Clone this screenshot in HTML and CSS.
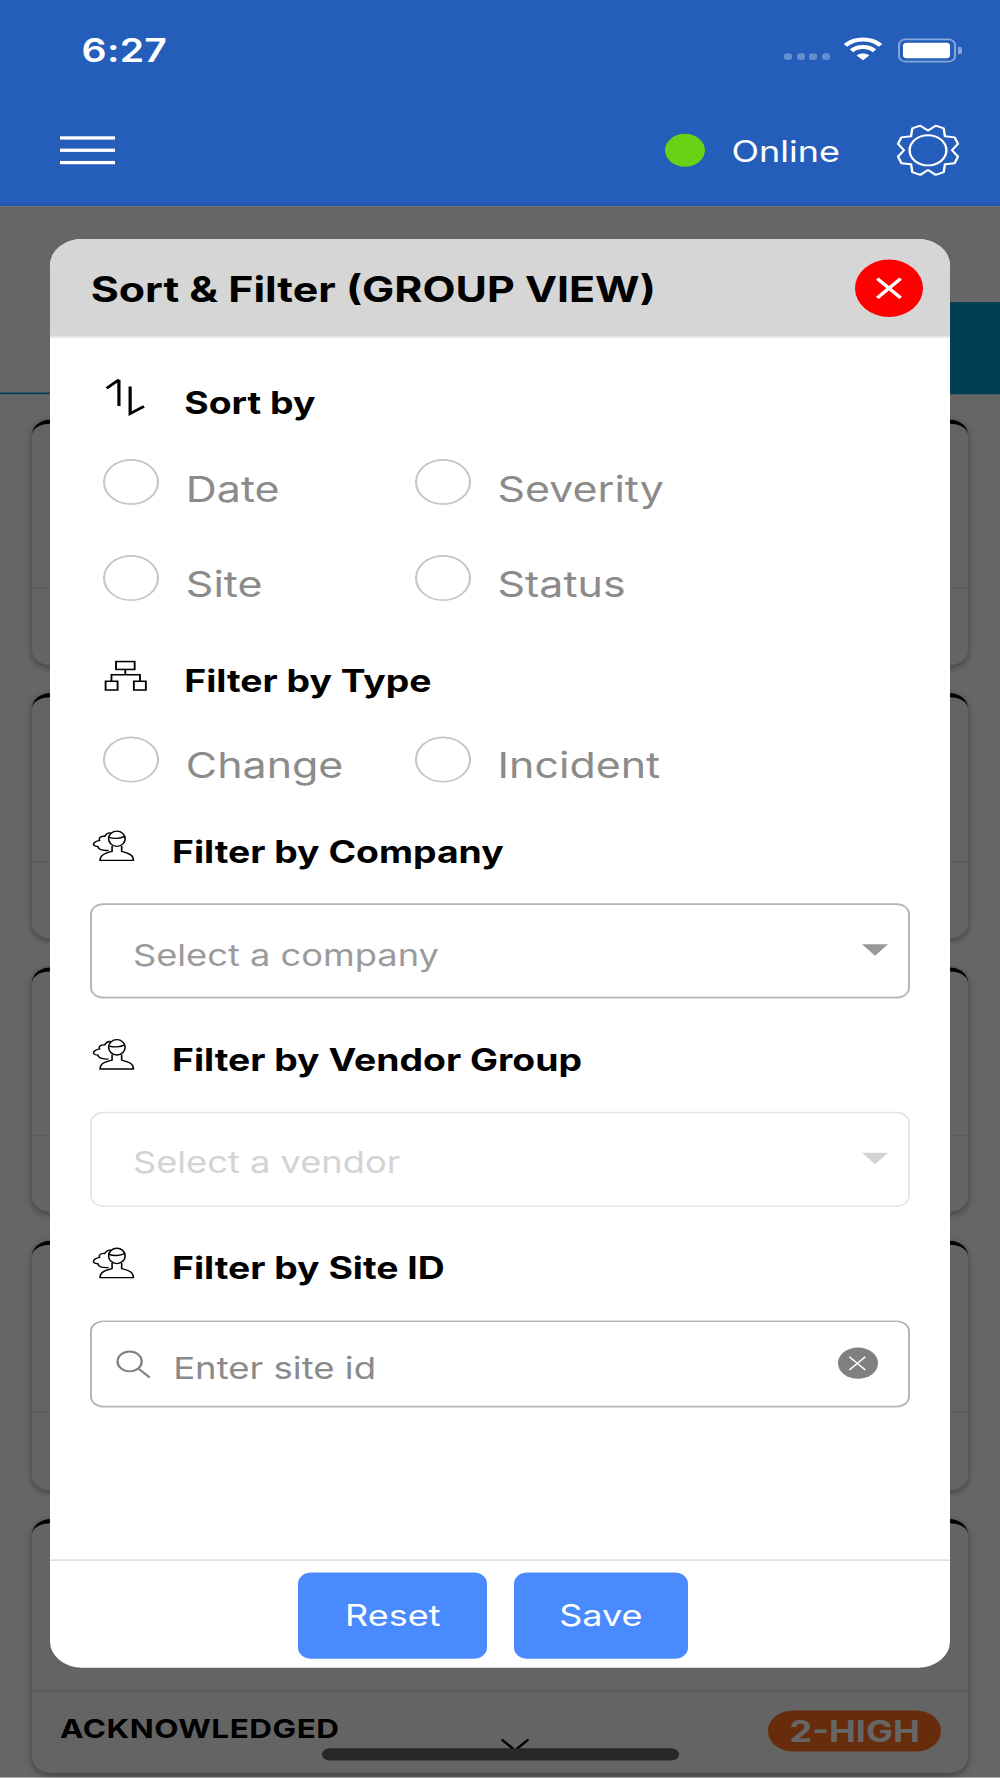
FILE: index.html
```html
<!DOCTYPE html>
<html lang="en">
<head>
<meta charset="utf-8">
<title>Sort &amp; Filter</title>
<link rel="stylesheet" href="styles.css">
</head>
<body>
<div class="screen">
  <header class="app-header">
    <div class="status-bar">
      <span class="time">6:27</span>
      <div class="status-icons">
        <div class="signal"><i></i><i></i><i></i><i></i></div>
        <svg class="wifi" viewBox="0 0 16 12"><path d="M.8 4.2C4.8.3 11.2.3 15.2 4.2" class="wifi-arc"/><path d="M3.3 6.9C5.9 4.4 10.1 4.4 12.7 6.9" class="wifi-arc"/><path d="M8 11.6 5.4 9.2C6.9 7.9 9.1 7.9 10.6 9.2Z" class="wifi-dot"/></svg>
        <div class="battery"><div class="battery-fill"></div></div>
        <div class="battery-nub"></div>
      </div>
    </div>
    <div class="nav-bar">
      <div class="hamburger"><i></i><i></i><i></i></div>
      <div class="nav-right">
        <span class="dot"></span>
        <span class="online">Online</span>
        <svg class="gear" viewBox="0 0 24 24"><polygon points="23.23,14.9 22,17.89 18.36,18.36 17.89,22 14.9,23.23 12,21 9.1,23.23 6.11,22 5.64,18.36 2,17.89 .77,14.9 3,12 .77,9.1 2,6.11 5.64,5.64 6.11,2 9.1,.77 12,3 14.9,.77 17.89,2 18.36,5.64 22,6.11 23.23,9.1 21,12"/><circle cx="12" cy="12" r="6.9"/></svg>
      </div>
    </div>
  </header>

  <main class="content">
    <div class="tabs"><div class="tab"></div><div class="tab tab-active"></div></div>
    <div class="card-list">
      <article class="card"><div class="card-main"></div><div class="card-foot"></div></article>
      <article class="card"><div class="card-main"></div><div class="card-foot"></div></article>
      <article class="card"><div class="card-main"></div><div class="card-foot"></div></article>
      <article class="card card-tall"><div class="card-main"></div><div class="card-foot"></div></article>
      <article class="card card-last">
        <div class="card-main"></div>
        <div class="card-foot">
          <span class="card-status">ACKNOWLEDGED</span>
          <svg class="chevron" viewBox="0 0 12 6"><path d="M1 .5 6 5.5 11 .5"/></svg>
          <span class="badge">2-HIGH</span>
        </div>
      </article>
    </div>
    <div class="backdrop"></div>
  </main>

  <section class="modal">
    <div class="modal-head">
      <h1 class="modal-title">Sort &amp; Filter (GROUP VIEW)</h1>
      <div class="close"><svg viewBox="0 0 12 12"><path d="M1 1 11 11M11 1 1 11"/></svg></div>
    </div>
    <div class="modal-body">
      <div class="section-title title-sort">
        <svg class="ico-sort" viewBox="0 0 16 18"><path d="M5.6.6V12.5M5.6.6 1 4.4M9.8 3.6V16L15 12.7"/></svg>
        <span>Sort by</span>
      </div>
      <div class="radio-grid">
        <label class="radio"><span class="radio-mark"></span><span class="radio-text">Date</span></label>
        <label class="radio"><span class="radio-mark"></span><span class="radio-text">Severity</span></label>
        <label class="radio"><span class="radio-mark"></span><span class="radio-text">Site</span></label>
        <label class="radio"><span class="radio-mark"></span><span class="radio-text">Status</span></label>
      </div>
      <div class="section-title title-type">
        <svg class="ico-tree" viewBox="0 0 16 15"><path d="M8 4.6V7H2.8V10M8 7H13.5V10"/><rect x="4.5" y="1" width="7" height="3.6"/><rect x=".6" y="10" width="4.5" height="4"/><rect x="11.2" y="10" width="4.5" height="4"/></svg>
        <span>Filter by Type</span>
      </div>
      <div class="radio-grid radio-grid-single">
        <label class="radio"><span class="radio-mark"></span><span class="radio-text">Change</span></label>
        <label class="radio"><span class="radio-mark"></span><span class="radio-text">Incident</span></label>
      </div>
      <div class="section-title title-company">
        <svg class="ico-user" viewBox="0 0 16.5 15"><use href="#user"/></svg>
        <span>Filter by Company</span>
      </div>
      <div class="select">
        <span class="select-text">Select a company</span>
        <span class="caret"></span>
      </div>
      <div class="section-title title-vendor">
        <svg class="ico-user" viewBox="0 0 16.5 15"><use href="#user"/></svg>
        <span>Filter by Vendor Group</span>
      </div>
      <div class="select select-disabled">
        <span class="select-text">Select a vendor</span>
        <span class="caret"></span>
      </div>
      <div class="section-title title-site">
        <svg class="ico-user" viewBox="0 0 16.5 15"><use href="#user"/></svg>
        <span>Filter by Site ID</span>
      </div>
      <div class="search">
        <svg class="ico-search" viewBox="0 0 14 14"><circle cx="5.7" cy="5.7" r="4.7"/><path d="M9 9 13.5 13.3"/></svg>
        <span class="search-text">Enter site id</span>
        <span class="clear"><svg viewBox="0 0 10 10"><path d="M2 2 8 8M8 2 2 8"/></svg></span>
      </div>
    </div>
    <div class="modal-foot">
      <button class="btn btn-reset">Reset</button>
      <button class="btn btn-save">Save</button>
    </div>
  </section>

  <div class="home-indicator"></div>
</div>

<svg class="defs" width="0" height="0">
  <symbol id="user" viewBox="0 0 16.5 15" overflow="visible">
    <ellipse cx="9.7" cy="4.3" rx="3.1" ry="3.5"/>
    <path d="M6.7 3.6C8.4 4.4 11 4.3 12.6 3.2"/>
    <path d="M7.9 7.6V10.1C5.4 10.9 3.4 11.6 3.4 14.2H15.9C15.9 11.6 13.9 10.8 11.5 10.1V7.6"/>
    <path d="M7.6 1.7C6.4 1.4 5.6 2.2 5.1 3.2 3.8 3 2.7 3.9 3.2 5 .9 5.6-.2 7.6 2.6 7.9 2.9 9.3 4.6 9.8 6.6 9.6"/>
  </symbol>
</svg>
</body>
</html>
```
FILE: styles.css
```css
html, body {
  margin: 0;
  padding: 0;
  width: 1000px;
  height: 1778px;
  overflow: hidden;
  background: #fff;
}

* { box-sizing: border-box; }

/* The capture is a 375x812 phone layout stretched to 1000x1778 */
.screen {
  position: relative;
  width: 375px;
  height: 811.9px;
  margin-bottom: -147px;
  overflow: hidden;
  font-family: Inter, "Liberation Sans", sans-serif;
  zoom: 2.6667;
  transform: scaleY(.82113);
  transform-origin: 0 0;
}

.defs { position: absolute; }

/* Header */
.app-header {
  height: 94px;
  background: #245eba;
  color: #fff;
  border-bottom: 1px solid #1f56ac;
}

.status-bar {
  height: 44px;
  display: flex;
  align-items: center;
  justify-content: space-between;
  padding: 1px 14.4px 0 30.6px;
}

.time {
  font-size: 14.7px;
  font-weight: 600;
  letter-spacing: .1px;
  margin-top: 1px;
}

.status-icons {
  display: flex;
  align-items: center;
  margin-top: 1px;
}

.signal {
  display: flex;
  gap: 1.7px;
  margin: 6px 5px 0 0;
}

.signal i {
  width: 3px;
  height: 3px;
  border-radius: 1.2px;
  background: rgba(255, 255, 255, .3);
}

.wifi {
  width: 15px;
  height: 11px;
  margin: -1px 5.4px 0 0;
}

.wifi-arc {
  fill: none;
  stroke: #fff;
  stroke-width: 2;
}

.wifi-dot { fill: #fff; }

.battery {
  width: 21.7px;
  height: 11px;
  padding: 1.3px;
  border: 1px solid rgba(255, 255, 255, .45);
  border-radius: 2.8px;
}

.battery-fill {
  height: 100%;
  background: #fff;
  border-radius: 1.4px;
}

.battery-nub {
  width: 1.4px;
  height: 3.6px;
  margin-left: .9px;
  background: rgba(255, 255, 255, .45);
  border-radius: 0 1px 1px 0;
}

.nav-bar {
  height: 49px;
  display: flex;
  align-items: center;
  justify-content: space-between;
  padding: 0 15px 0 22.5px;
}

.hamburger {
  width: 20.8px;
  display: flex;
  flex-direction: column;
  gap: 4.1px;
}

.hamburger i {
  height: 1.5px;
  background: #fff;
}

.nav-right {
  display: flex;
  align-items: center;
}

.dot {
  width: 15px;
  height: 15px;
  border-radius: 50%;
  background: #6ad014;
  margin-right: 10px;
}

.online {
  font-size: 13.5px;
  width: 61.7px;
  margin-top: 1px;
}

.gear {
  width: 24px;
  height: 24px;
  fill: none;
  stroke: #fff;
  stroke-width: .9;
  stroke-linejoin: round;
}

/* Content behind the dialog */
.content {
  position: relative;
  height: 717.9px;
  background: #fff;
}

.tabs {
  display: flex;
  height: 42px;
  position: absolute;
  top: 44px;
  left: 0;
  right: 0;
}

.tab {
  flex: 1;
  border-bottom: 1px solid #009ecd;
}

.tab-active { background: #009ecd; }

.card-list {
  padding: 97.6px 12px 0;
  display: flex;
  flex-direction: column;
  gap: 13px;
}

.card {
  height: 112px;
  display: flex;
  flex-direction: column;
  background: #fafafa;
  border-top: 2px solid #000;
  border-radius: 7px;
  box-shadow: 0 1px 3px rgba(0, 0, 0, .35);
}

.card-tall { height: 114px; }
.card-last { height: 116px; }

.card-main {
  height: 75.5px;
  border-bottom: 1px solid #e2e2e2;
  flex: none;
}

.card-tall .card-main { height: 77px; }
.card-last .card-main { height: 77px; }

.card-foot {
  position: relative;
  flex: 1;
  display: flex;
  align-items: center;
  justify-content: space-between;
  padding: 0 10px 3px 10.5px;
}

.card-status {
  font-size: 11.8px;
  font-weight: 700;
  color: #000;
  letter-spacing: .2px;
}

.badge {
  width: 65px;
  height: 18.6px;
  display: flex;
  align-items: center;
  justify-content: center;
  border-radius: 9.3px;
  background: #ff6e20;
  color: #fff;
  font-size: 13.5px;
  font-weight: 700;
  margin-top: 2px;
}

.chevron {
  position: absolute;
  left: 175px;
  top: 21.5px;
  width: 12px;
  height: 6px;
  fill: none;
  stroke: #000;
  stroke-width: 1;
}

.backdrop {
  position: absolute;
  inset: 0;
  background: rgba(0, 0, 0, .6);
}

/* Dialog */
.modal {
  position: absolute;
  left: 18.7px;
  top: 109px;
  width: 337.6px;
  height: 652.5px;
  display: flex;
  flex-direction: column;
  background: #fff;
  border-radius: 12px;
  overflow: hidden;
}

.modal-head {
  flex: none;
  height: 45px;
  display: flex;
  align-items: center;
  justify-content: space-between;
  padding: 0 10.2px 0 15.3px;
  background: #d6d6d6;
  border-bottom: 1px solid #e4e4e4;
}

.modal-title {
  margin: 2px 0 0;
  font-size: 16.1px;
  font-weight: 700;
  color: #000;
}

.close {
  width: 25.6px;
  height: 26.4px;
  display: flex;
  align-items: center;
  justify-content: center;
  border-radius: 50%;
  background: #ff0000;
  margin-top: 1px;
}

.close svg {
  width: 10.5px;
  height: 12px;
  fill: none;
  stroke: #fff;
  stroke-width: 1.6;
}

.modal-body {
  flex: 1;
  display: flex;
  flex-direction: column;
  padding: 20px 14.9px 0 15px;
}

.section-title {
  flex: none;
  position: relative;
  height: 20px;
  display: flex;
  align-items: center;
  font-size: 14px;
  font-weight: 700;
  color: #000;
}

.title-sort, .title-type { padding-left: 35.4px; }

.title-company, .title-vendor, .title-site { padding-left: 30.8px; }

.title-type { margin-top: 26.7px; }
.title-company { margin-top: 21.5px; }
.title-vendor { margin-top: 18px; }
.title-site { margin-top: 18px; }

.ico-sort, .ico-tree, .ico-user {
  position: absolute;
  fill: none;
  stroke: #000;
}

.ico-sort {
  left: 5.3px;
  top: -1px;
  width: 16px;
  height: 18px;
  stroke-width: 1.2;
}

.ico-tree {
  left: 5.3px;
  top: 0;
  width: 16px;
  height: 15px;
  stroke-width: .7;
}

.ico-user {
  left: .6px;
  top: 0;
  width: 16.5px;
  height: 15px;
  stroke-width: .6;
  overflow: visible;
}

.radio-grid {
  display: grid;
  grid-template-columns: 116.9px 1fr;
  row-gap: 22.8px;
  margin-top: 15.7px;
  padding-left: 5px;
}

.radio-grid-single { margin-top: 15.2px; }

.radio {
  display: flex;
  height: 21px;
  align-items: center;
}

.radio-mark {
  flex: none;
  width: 21px;
  height: 21px;
  border: 1px solid #c5c5c8;
  border-radius: 50%;
  margin-right: 10px;
}

.radio-text {
  font-size: 16.1px;
  color: #8d8a8a;
  margin-top: 5.5px;
}

.select {
  flex: none;
  position: relative;
  height: 43.3px;
  margin-top: 13.7px;
  display: flex;
  align-items: center;
  padding: 4px 15.4px 0;
  border: 1px solid #b5b5b5;
  border-radius: 5px;
}

.select-text {
  font-size: 13.6px;
  color: #9b9b9b;
}

.caret {
  position: absolute;
  right: 7.5px;
  top: 18px;
  width: 0;
  height: 0;
  border-left: 5px solid transparent;
  border-right: 5px solid transparent;
  border-top: 5.5px solid #999;
}

.select-disabled {
  margin-top: 14px;
  padding-top: 3px;
  border-color: #e5e5e5;
}

.select-disabled .select-text { color: #d3d3d3; }
.select-disabled .caret { border-top-color: #d3d3d3; }

.search {
  flex: none;
  height: 39.6px;
  margin-top: 14px;
  display: flex;
  align-items: center;
  padding: 0 11.5px 0 8.7px;
  border: 1px solid #b5b5b5;
  border-radius: 5px;
}

.ico-search {
  width: 13.5px;
  height: 14.5px;
  fill: none;
  stroke: #808080;
  stroke-width: .9;
  margin: 0 8.3px 0 0;
}

.search-text {
  flex: 1;
  font-size: 13.7px;
  color: #8a8a8a;
  margin-top: 3.5px;
}

.clear {
  width: 15px;
  height: 14px;
  display: flex;
  align-items: center;
  justify-content: center;
  border-radius: 50%;
  background: #808080;
  margin-top: -1px;
}

.clear svg {
  width: 10px;
  height: 10px;
  fill: none;
  stroke: #fff;
  stroke-width: .6;
}

.modal-foot {
  flex: none;
  height: 49.5px;
  display: flex;
  justify-content: flex-start;
  gap: 9.8px;
  padding: 5.2px 0 0 93.1px;
  border-top: 1px solid #e0e0e0;
}

.btn {
  height: 39.4px;
  border: 0;
  border-radius: 5px;
  background: #4a8aff;
  color: #fff;
  font-family: inherit;
  font-size: 13.5px;
  padding: 0;
}

.btn-reset { width: 71px; }
.btn-save { width: 65.5px; }

.home-indicator {
  position: absolute;
  left: 120.7px;
  top: 798.5px;
  width: 134px;
  height: 5.5px;
  border-radius: 3px;
  background: #282828;
}
```
